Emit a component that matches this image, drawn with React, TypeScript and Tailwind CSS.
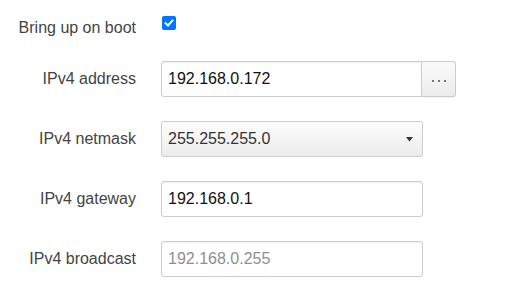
import React from "react";

const font = { fontFamily: '"Liberation Sans", Arial, sans-serif' };

function Label({ children }: { children: React.ReactNode }) {
  return (
    <div className="w-[136px] shrink-0 text-right text-[16px] leading-5 text-[#444]">{children}</div>
  );
}

export default function App() {
  return (
    <div className="w-[513px] h-[296px] bg-white pt-4" style={font}>
      <div className="flex items-start">
        <div className="w-[136px] shrink-0 text-right text-[16px] leading-5 text-[#444] pt-[2px]">Bring up on boot</div>
        <div className="ml-[26px] w-[14px] h-[14px] rounded-[2px] bg-[#0075ff] flex items-center justify-center">
          <svg width="10" height="10" viewBox="0 0 10 10">
            <path d="M1.6 5.2 L4 7.5 L8.4 2.6" stroke="white" strokeWidth="2" fill="none" strokeLinecap="square" />
          </svg>
        </div>
      </div>
      <div className="mt-[23px] flex flex-col gap-6">
        <div className="flex items-center h-9">
          <Label>IPv4 address</Label>
          <div className="ml-[25px] flex h-9">
            <div className="w-[261px] h-9 border border-[#cccccc] rounded-l-[3px] flex items-center pl-[6px] text-[16px] text-[#111] shadow-[inset_0_1px_1px_rgba(0,0,0,0.05)]">
              192.168.0.172
            </div>
            <div className="w-[34px] h-9 border border-l-0 border-[#cccccc] rounded-r-[3px] bg-gradient-to-b from-[#fafafa] to-[#ececec] flex items-center justify-center gap-[4px] pt-[4px] shadow-[0_1px_1px_rgba(0,0,0,0.06)]">
              <span className="w-[2px] h-[2px] bg-[#777]" />
              <span className="w-[2px] h-[2px] bg-[#777]" />
              <span className="w-[2px] h-[2px] bg-[#777]" />
            </div>
          </div>
        </div>
        <div className="flex items-center h-9">
          <Label>IPv4 netmask</Label>
          <div className="ml-[25px] w-[262px] h-9 border border-[#cccccc] rounded-[3px] bg-gradient-to-b from-[#fdfdfd] to-[#ececec] flex items-center pl-[6px] pr-[9px] text-[16px] text-[#333]">
            <span className="flex-1">255.255.255.0</span>
            <svg width="7" height="5" viewBox="0 0 7 5" className="mt-[1px]">
              <path d="M0 0 H7 L3.5 4.5 Z" fill="#333" />
            </svg>
          </div>
        </div>
        <div className="flex items-center h-9">
          <Label>IPv4 gateway</Label>
          <div className="ml-[25px] w-[262px] h-9 border border-[#cccccc] rounded-[3px] flex items-center pl-[6px] text-[16px] text-[#111] shadow-[inset_0_1px_1px_rgba(0,0,0,0.05)]">
            192.168.0.1
          </div>
        </div>
        <div className="flex items-center h-9">
          <Label>IPv4 broadcast</Label>
          <div className="ml-[25px] w-[262px] h-9 border border-[#cccccc] rounded-[3px] flex items-center pl-[6px] text-[16px] text-[#8f8f8f] shadow-[inset_0_1px_1px_rgba(0,0,0,0.05)]">
            192.168.0.255
          </div>
        </div>
      </div>
    </div>
  );
}
